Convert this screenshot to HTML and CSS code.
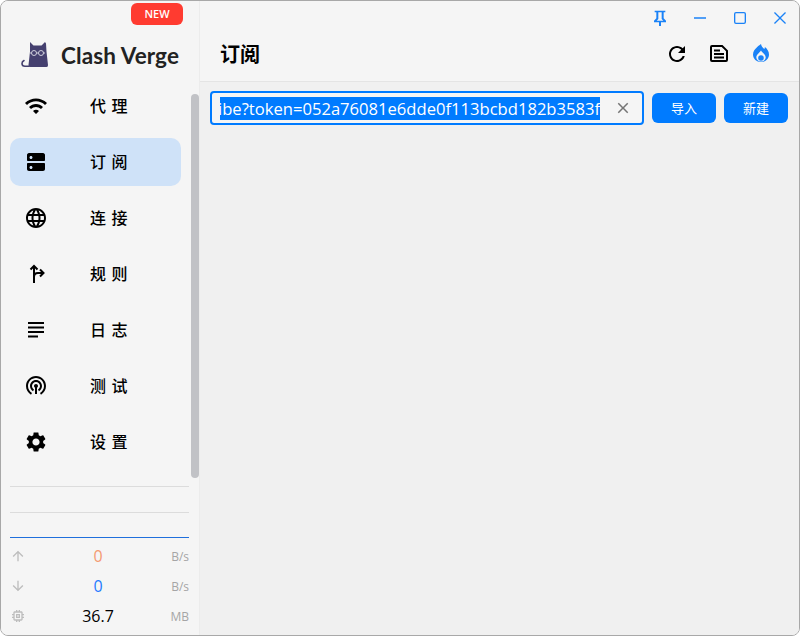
FILE: index.html
```html
<!DOCTYPE html>
<html lang="zh-CN">

<head>
    <meta charset="UTF-8">
    <title>Clash Verge</title>
    <link rel="stylesheet" href="styles.css">
</head>

<body>
    <div class="window">
        <aside class="sidebar">
            <div class="logo-row">
                <svg class="cat" width="30" height="28" viewBox="0 0 30 28">
                    <path fill="#45406f" d="M10 0l3.500 3.500h8L25 0l1 1.500.500 8L28 23q.2 2-1.500 2H10q-1.700 0-1.500-2L10 9.500z"/>
                    <path fill="none" stroke="#45406f" stroke-width="1.600" stroke-linecap="round" d="M9 24.200H5Q2 24.200 2 21.500q0-2 2-3"/>
                    <g fill="none" stroke="#dcdce6" stroke-width=".9">
                        <circle cx="14" cy="11" r="2.500"/>
                        <circle cx="21" cy="11" r="2.500"/>
                        <path d="M16.500 11h2M11.500 11H10M23.500 11H25"/>
                    </g>
                </svg>
                <span class="logo-text">Clash Verge</span>
                <span class="new-badge">NEW</span>
            </div>

            <div class="nav-wrap">
                <nav class="nav">
                    <a class="nav-item">
                        <svg class="nav-icon" viewBox="0 0 24 24"><path d="M1 9l2 2c4.970-4.970 13.030-4.970 18 0l2-2C16.930 2.930 7.080 2.930 1 9zm8 8l3 3 3-3c-1.650-1.660-4.340-1.660-6 0zm-4-4l2 2c2.760-2.760 7.240-2.760 10 0l2-2C15.140 9.140 8.870 9.140 5 13z"/></svg>
                        <span class="nav-label">代 理</span>
                    </a>
                    <a class="nav-item active">
                        <svg class="nav-icon" viewBox="0 0 24 24"><path d="M4 13h16c.550 0 1 .450 1 1v5c0 1-.800 2-2 2H5c-1.200 0-2-1-2-2v-5c0-.550.450-1 1-1zm3 6c.830 0 1.500-.670 1.500-1.500S7.830 16 7 16s-1.500.670-1.500 1.500S6.170 19 7 19zM5 3h14c1.200 0 2 1 2 2v5c0 .550-.450 1-1 1H4c-.550 0-1-.450-1-1V5c0-1 .800-2 2-2zm2 6c.830 0 1.500-.670 1.500-1.500S7.830 6 7 6s-1.500.670-1.500 1.500S6.170 9 7 9z"/></svg>
                        <span class="nav-label">订 阅</span>
                    </a>
                    <a class="nav-item">
                        <svg class="nav-icon" viewBox="0 0 24 24"><path d="M11.990 2C6.470 2 2 6.480 2 12s4.470 10 9.990 10C17.520 22 22 17.520 22 12S17.520 2 11.990 2zm6.930 6h-2.950c-.320-1.250-.780-2.450-1.380-3.560 1.840.630 3.370 1.910 4.330 3.560zM12 4.040c.830 1.200 1.480 2.530 1.910 3.960h-3.820c.430-1.430 1.080-2.760 1.910-3.960zM4.260 14C4.100 13.360 4 12.690 4 12s.100-1.360.260-2h3.380c-.080.660-.140 1.320-.140 2s.060 1.340.140 2H4.260zm.820 2h2.950c.320 1.250.780 2.450 1.380 3.560-1.840-.630-3.370-1.900-4.330-3.560zm2.950-8H5.080c.960-1.660 2.490-2.930 4.330-3.560C8.810 5.550 8.350 6.750 8.030 8zM12 19.960c-.830-1.200-1.480-2.530-1.910-3.960h3.820c-.430 1.430-1.080 2.760-1.910 3.960zM14.340 14H9.660c-.090-.660-.160-1.320-.160-2s.070-1.350.160-2h4.680c.090.650.160 1.320.160 2s-.070 1.340-.160 2zm.250 5.560c.600-1.110 1.060-2.310 1.380-3.560h2.950c-.960 1.650-2.490 2.930-4.330 3.560zM16.360 14c.080-.660.140-1.320.140-2s-.060-1.340-.140-2h3.380c.160.640.260 1.310.260 2s-.100 1.360-.260 2h-3.380z"/></svg>
                        <span class="nav-label">连 接</span>
                    </a>
                    <a class="nav-item">
                        <svg class="nav-icon icon-stroke" viewBox="0 0 24 24"><path d="M10 21V4M6.500 7.500L10 4l3.500 3.500M10 15q0-4 4-4h5M16 7.500l3.500 3.500-3.500 3.500"/></svg>
                        <span class="nav-label">规 则</span>
                    </a>
                    <a class="nav-item">
                        <svg class="nav-icon" viewBox="0 0 24 24"><path d="M4 4h16v2H4zM4 8.500h16v2H4zM4 13h16v2H4zM4 17.500h10v2H4z"/></svg>
                        <span class="nav-label">日 志</span>
                    </a>
                    <a class="nav-item">
                        <svg class="nav-icon" viewBox="0 0 24 24"><path d="M12 11c-1.100 0-2 .900-2 2 0 .740.400 1.380 1 1.720V21h2v-6.280c.600-.340 1-.980 1-1.720 0-1.100-.900-2-2-2zm6 2c0-3.310-2.690-6-6-6s-6 2.690-6 6c0 2.220 1.210 4.150 3 5.190l1-1.740c-1.190-.700-2-1.970-2-3.450 0-2.210 1.790-4 4-4s4 1.790 4 4c0 1.480-.810 2.750-2 3.450l1 1.740c1.790-1.040 3-2.970 3-5.190zM12 3C6.480 3 2 7.480 2 13c0 3.700 2.010 6.920 4.990 8.650l1-1.730C5.610 18.530 4 15.950 4 13c0-4.420 3.580-8 8-8s8 3.580 8 8c0 2.950-1.610 5.530-4 6.920l1 1.730C19.990 19.920 22 16.700 22 13c0-5.520-4.480-10-10-10z" transform="translate(0 -1)"/></svg>
                        <span class="nav-label">测 试</span>
                    </a>
                    <a class="nav-item">
                        <svg class="nav-icon" viewBox="0 0 24 24"><path d="M19.140 12.940c.040-.300.060-.610.060-.940 0-.320-.020-.640-.070-.940l2.030-1.580c.180-.140.230-.410.120-.610l-1.920-3.320c-.120-.220-.370-.290-.590-.220l-2.390.960c-.500-.380-1.030-.700-1.620-.940l-.360-2.540c-.040-.240-.240-.410-.480-.410h-3.840c-.240 0-.430.170-.470.410l-.360 2.540c-.590.240-1.130.570-1.620.940l-2.390-.960c-.220-.080-.470 0-.590.220L2.740 8.870c-.120.210-.080.470.120.610l2.030 1.580c-.050.300-.090.630-.090.940s.020.640.070.940l-2.030 1.580c-.180.140-.230.410-.120.610l1.920 3.320c.120.220.370.290.590.220l2.390-.960c.500.380 1.030.700 1.620.940l.360 2.540c.050.240.240.410.480.410h3.840c.240 0 .440-.170.470-.410l.360-2.540c.590-.240 1.130-.560 1.620-.940l2.390.960c.220.080.470 0 .590-.220l1.920-3.320c.120-.220.070-.470-.120-.610l-2.010-1.580zM12 15.600c-1.980 0-3.600-1.620-3.600-3.600s1.620-3.600 3.600-3.600 3.600 1.620 3.600 3.600-1.620 3.600-3.600 3.600z"/></svg>
                        <span class="nav-label">设 置</span>
                    </a>
                </nav>
                <div class="scroll-track"><div class="scroll-thumb"></div></div>
            </div>

            <div class="traffic">
                <div class="rule rule-gray"></div>
                <div class="rule rule-gray"></div>
                <div class="rule rule-blue"></div>
                <div class="traffic-row">
                    <svg class="traffic-icon" viewBox="0 0 24 24"><path d="M4 12l1.410 1.410L11 7.830V20h2V7.830l5.580 5.590L20 12l-8-8-8 8z"/></svg>
                    <span class="traffic-value up">0</span>
                    <span class="traffic-unit">B/s</span>
                </div>
                <div class="traffic-row">
                    <svg class="traffic-icon" viewBox="0 0 24 24"><path d="M20 12l-1.410-1.410L13 16.170V4h-2v12.170l-5.580-5.590L4 12l8 8 8-8z"/></svg>
                    <span class="traffic-value down">0</span>
                    <span class="traffic-unit">B/s</span>
                </div>
                <div class="traffic-row">
                    <svg class="traffic-icon" viewBox="0 0 24 24"><path d="M15 9H9v6h6V9zm-2 4h-2v-2h2v2zm8-2V9h-2V7c0-1.100-.900-2-2-2h-2V3h-2v2h-2V3H9v2H7c-1.100 0-2 .900-2 2v2H3v2h2v2H3v2h2v2c0 1.100.900 2 2 2h2v2h2v-2h2v2h2v-2h2c1.100 0 2-.900 2-2v-2h2v-2h-2v-2h2zm-4 6H7V7h10v10z"/></svg>
                    <span class="traffic-value">36.7</span>
                    <span class="traffic-unit">MB</span>
                </div>
            </div>
        </aside>

        <main class="main">
            <div class="header">
                <div class="win-buttons">
                    <svg class="win-icon" viewBox="0 0 24 24"><path d="M20 1v2.500h-2.500v9l3.500 3.500v2.500h-7.500V24h-3v-5.500H3V16l3.500-3.500v-9H4V1h16zM9.500 3.500v10L7 16h10l-2.500-2.500v-10h-5z"/></svg>
                    <svg class="win-icon" viewBox="0 0 24 24"><path d="M3 11h18v2H3z"/></svg>
                    <svg class="win-icon" viewBox="0 0 24 24"><path d="M6 3h12a3 3 0 0 1 3 3v12a3 3 0 0 1-3 3H6a3 3 0 0 1-3-3V6a3 3 0 0 1 3-3zm0 2a1 1 0 0 0-1 1v12a1 1 0 0 0 1 1h12a1 1 0 0 0 1-1V6a1 1 0 0 0-1-1H6z"/></svg>
                    <svg class="win-icon" viewBox="0 0 24 24"><path d="M21 4.400L19.600 3 12 10.600 4.400 3 3 4.400 10.600 12 3 19.600 4.400 21 12 13.400 19.600 21 21 19.600 13.400 12z"/></svg>
                </div>
                <div class="title-row">
                    <h1 class="title">订阅</h1>
                    <div class="actions">
                        <svg class="action-icon" viewBox="0 0 24 24"><path d="M17.650 6.350C16.200 4.900 14.210 4 12 4c-4.420 0-7.990 3.580-7.990 8s3.570 8 7.990 8c3.730 0 6.840-2.550 7.730-6h-2.080c-.820 2.330-3.040 4-5.650 4-3.310 0-6-2.690-6-6s2.690-6 6-6c1.660 0 3.140.690 4.220 1.780L13 11h7V4l-2.350 2.350z"/></svg>
                        <svg class="action-icon" viewBox="0 0 24 24"><path fill-rule="evenodd" d="M5 3h10.500L21 8.500V18a2 2 0 0 1-2 2H5a2 2 0 0 1-2-2V5a2 2 0 0 1 2-2zm0 2v13h14V9.300L14.700 5H5zm2 2.500h6v2H7zM7 11h10v2H7zm0 3.500h10v2H7z"/></svg>
                        <svg class="action-icon blue" viewBox="0 0 24 24">
                            <path d="M12 2c.400 2.500 1.800 3.800 3.400 5.100.300-.700.500-1.300.500-2 2.500 2 4.100 4.600 4.100 7.400 0 4.400-3.600 7.500-8 7.500s-8-3.100-8-7.500c0-3.200 2-5.500 4-7.300 1.700-1.500 3.300-2.900 4-3.200z"/>
                            <path class="flame-gap" d="M12 8.500c.600 1.500 4.700 4 4.700 6.800 0 2.700-2.100 4.200-4.700 4.200s-4.700-1.500-4.700-4.200c0-2.800 4.100-5.300 4.700-6.800z"/>
                            <circle cx="12" cy="16" r="2.800"/>
                        </svg>
                    </div>
                </div>
            </div>

            <div class="content">
                <div class="toolbar">
                    <div class="url-input">
                        <div class="url-clip"><span class="url-text">ibe?token=052a76081e6dde0f113bcbd182b3583f</span></div>
                        <svg class="clear-icon" viewBox="0 0 24 24"><path d="M19 6.410L17.590 5 12 10.590 6.410 5 5 6.410 10.590 12 5 17.590 6.410 19 12 13.410 17.590 19 19 17.590 13.410 12z"/></svg>
                    </div>
                    <button class="btn">导入</button>
                    <button class="btn">新建</button>
                </div>
            </div>
        </main>
    </div>
</body>

</html>
```

FILE: styles.css
```css
html,
body {
    margin: 0;
    height: 100%;
    background-color: #ffffff;
}

body {
    font-family: "Open Sans", "Noto Sans CJK SC", sans-serif;
    color: #000;
    overflow: hidden;
}

.window {
    display: flex;
    height: 636px;
    box-sizing: border-box;
    border: 1px solid #a8a8a8;
    border-radius: 8px;
    overflow: hidden;
    background-color: #f5f5f5;
}

.sidebar {
    width: 198px;
    flex: none;
    display: flex;
    flex-direction: column;
    background-color: #f5f5f5;
    border-right: 1px solid #ececec;
}

.logo-row {
    position: relative;
    height: 81px;
    display: flex;
    align-items: flex-end;
    padding-left: 19px;
    box-sizing: border-box;
    padding-bottom: 12px;
}

.cat {
    flex: none;
}

.logo-text {
    margin-left: 11px;
    font-family: "Lato", sans-serif;
    font-size: 22.5px;
    font-weight: 700;
    color: #222;
    line-height: 28px;
    letter-spacing: 0.1px;
}

.new-badge {
    position: absolute;
    top: 2px;
    left: 130px;
    width: 52px;
    height: 22px;
    border-radius: 6px;
    background-color: #ff3b30;
    color: #fff;
    font-size: 11px;
    font-weight: 600;
    line-height: 21px;
    text-align: center;
}

.nav-wrap {
    position: relative;
    height: 396px;
}

.nav {
    display: flex;
    flex-direction: column;
    gap: 8px;
    padding: 0 18px 0 9px;
}

.nav-item {
    display: flex;
    align-items: center;
    height: 48px;
    border-radius: 10px;
    padding-left: 14px;
}

.nav-item.active {
    background-color: #cfe2f8;
}

.nav-icon {
    width: 24px;
    height: 24px;
    flex: none;
}

.icon-stroke {
    fill: none;
    stroke: #000;
    stroke-width: 2;
}

.nav-label {
    margin-left: 42px;
    padding-bottom: 2px;
    font-family: "Noto Sans CJK SC", sans-serif;
    font-size: 16px;
    font-weight: 500;
    word-spacing: 2px;
}

.scroll-track {
    position: absolute;
    top: 12px;
    right: 0;
    width: 8px;
    height: 384px;
}

.scroll-thumb {
    width: 100%;
    height: 100%;
    background-color: #c1c2c6;
    border-radius: 4px;
}

.traffic {
    padding: 8px 10px 0 9px;
}

.rule {
    height: 1px;
}

.rule-gray {
    background-color: #dcdcdc;
    margin-bottom: 25px;
}

.rule-gray + .rule-gray {
    margin-bottom: 24px;
}

.rule-blue {
    background-color: #1f6fdc;
    margin-bottom: 3px;
}

.traffic-row {
    display: flex;
    align-items: center;
    height: 30px;
}

.traffic-icon {
    width: 16px;
    height: 16px;
    fill: #bdbdbd;
    flex: none;
}

.traffic-value {
    flex: 1;
    text-align: center;
    font-size: 16px;
    margin-left: 11px;
}

.traffic-value.up {
    color: #f49a72;
}

.traffic-value.down {
    color: #1f7bff;
}

.traffic-unit {
    width: 30px;
    text-align: right;
    font-size: 12px;
    color: #a5a5a5;
}

.main {
    flex: 1;
    display: flex;
    flex-direction: column;
    min-width: 0;
}

.header {
    height: 81px;
    box-sizing: border-box;
    border-bottom: 1px solid #e4e4e4;
    display: flex;
    flex-direction: column;
    background-color: #f5f5f5;
}

.win-buttons {
    display: flex;
    justify-content: flex-end;
    gap: 24px;
    padding: 9px 11px 0 0;
}

.win-icon {
    width: 16px;
    height: 16px;
    fill: #1a82f7;
}

.title-row {
    flex: 1;
    display: flex;
    align-items: center;
    justify-content: space-between;
    padding: 0 26px 0 20px;
}

.title {
    margin: 0;
    font-family: "Noto Sans CJK SC", sans-serif;
    font-size: 20px;
    font-weight: 700;
}

.actions {
    display: flex;
    gap: 18px;
}

.action-icon {
    width: 24px;
    height: 24px;
}

.action-icon.blue {
    fill: #1a82f7;
}

.flame-gap {
    fill: #f5f5f5;
}

.content {
    flex: 1;
    background-color: #f0f0f0;
    padding: 9px 11px 0 10px;
}

.toolbar {
    display: flex;
    align-items: center;
    gap: 8px;
    height: 34px;
}

.url-input {
    flex: 1;
    min-width: 0;
    display: flex;
    align-items: center;
    box-sizing: border-box;
    height: 34px;
    border: 2px solid #007bff;
    border-radius: 4px;
    background-color: #f5f5f5;
    padding: 0 10px 0 8px;
}

.url-clip {
    flex: 1;
    min-width: 0;
    overflow: hidden;
    white-space: nowrap;
}

.url-text {
    display: inline-block;
    vertical-align: top;
    overflow: hidden;
    text-indent: -2px;
    background-color: #007bff;
    color: #fff;
    font-family: "Open Sans", sans-serif;
    font-size: 16.6px;
    line-height: 23px;
}

.clear-icon {
    width: 18px;
    height: 18px;
    fill: #757575;
    flex: none;
    margin-left: 12px;
}

.btn {
    width: 64px;
    height: 30px;
    flex: none;
    border: 0;
    border-radius: 6px;
    padding: 0 0 2px;
    background-color: #007bff;
    color: #fff;
    font-family: "Noto Sans CJK SC", sans-serif;
    font-size: 13px;
}
```
